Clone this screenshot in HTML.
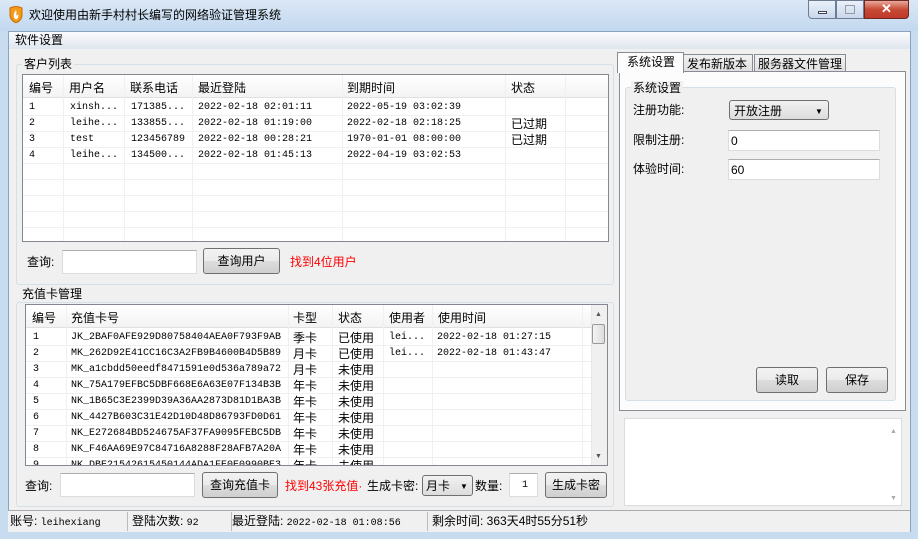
<!DOCTYPE html>
<html><head><meta charset="utf-8"><style>
*{box-sizing:border-box;margin:0;padding:0}
body{width:918px;height:539px;overflow:hidden;background:#c8dcf0;font-family:"Liberation Sans","Noto Sans CJK SC",sans-serif;font-size:12px;color:#000;position:relative}
.a{position:absolute}
.t{position:absolute;white-space:nowrap;line-height:14px}
.m{font-family:"Liberation Mono","Noto Sans CJK SC",monospace;font-size:10px}
.box{position:absolute;background:#fff;border:1px solid #828790}
.inp{position:absolute;background:#fff;border:1px solid #dcdcdc;border-top-color:#abadb3}
.btn{position:absolute;border:1px solid #707070;border-radius:3px;background:linear-gradient(#f2f2f2 0,#ebebeb 50%,#dddddd 51%,#cfcfcf 100%);text-align:center}
.grp{position:absolute;border:1px solid #d5dfe5;border-radius:3px}
.lbl{position:absolute;background:#f0f0f0;padding:0 2px;line-height:14px;white-space:nowrap}
.hd{position:absolute;background:linear-gradient(#fff,#f3f3f3);border-bottom:1px solid #e0e0e0}
.vl{position:absolute;width:1px;background:#f0f0f0}
.hl{position:absolute;height:1px;background:#f0f0f0}
.red{color:#f00}
</style></head><body>
<!-- title bar -->
<div class="a" style="left:0;top:0;width:918px;height:31px;background:linear-gradient(#dbe8f6,#c2d8ef)"></div>
<svg class="a" style="left:8px;top:6px" width="16" height="17" viewBox="0 0 16 17"><path d="M2 2 L8 0 L14 2 L14 9 Q14 14 8 17 Q2 14 2 9Z" fill="#f39a1a" stroke="#c96a00"/><path d="M8 4 Q5 8 6 11 Q7 14 9 13 Q11 11 10 8 Q9 10 8 9 Q9 7 8 4Z" fill="#fff"/></svg>
<div class="t" style="left:29px;top:8px;font-size:12px">欢迎使用由新手村村长编写的网络验证管理系统</div>
<div class="a" style="left:808px;top:0;width:28px;height:19px;border:1px solid #6d7c93;border-radius:0 0 0 4px;background:linear-gradient(#eaf1fa,#c9d8ec)"><div class="a" style="left:9px;top:10px;width:9px;height:3px;background:#fff;border:1px solid #445"></div></div>
<div class="a" style="left:836px;top:0;width:28px;height:19px;border:1px solid #6d7c93;background:linear-gradient(#eaf1fa,#c9d8ec)"><div class="a" style="left:8px;top:4px;width:10px;height:9px;border:1px solid #99a"></div></div>
<div class="a" style="left:864px;top:0;width:45px;height:19px;border:1px solid #6d2a22;border-radius:0 0 4px 0;background:linear-gradient(#e9a99b,#c74a34 50%,#c0392b);color:#fff;font-weight:bold;text-align:center;line-height:16px;font-size:13px">✕</div>
<!-- client -->
<div class="a" style="left:8px;top:31px;width:903px;height:501px;background:#f0f0f0;border:1px solid #8aa2bd"></div>
<div class="a" style="left:9px;top:32px;width:901px;height:17px;background:linear-gradient(#fafbfd,#dfe6ef)"></div>
<div class="t" style="left:15px;top:33px">软件设置</div>

<!-- 客户列表 group -->
<div class="grp" style="left:16px;top:64px;width:598px;height:221px"></div>
<div class="lbl" style="left:22px;top:57px">客户列表</div>
<div class="box" style="left:22px;top:74px;width:587px;height:168px"></div>
<div class="hd" style="left:23px;top:75px;width:585px;height:23px"></div>
<div class="vl" style="left:63px;top:75px;height:166px"></div><div class="vl" style="left:124px;top:75px;height:166px"></div><div class="vl" style="left:192px;top:75px;height:166px"></div><div class="vl" style="left:342px;top:75px;height:166px"></div><div class="vl" style="left:505px;top:75px;height:166px"></div><div class="vl" style="left:565px;top:75px;height:166px"></div>
<div class="hl" style="left:23px;top:115px;width:585px"></div><div class="hl" style="left:23px;top:131px;width:585px"></div><div class="hl" style="left:23px;top:147px;width:585px"></div><div class="hl" style="left:23px;top:163px;width:585px"></div><div class="hl" style="left:23px;top:179px;width:585px"></div><div class="hl" style="left:23px;top:195px;width:585px"></div><div class="hl" style="left:23px;top:211px;width:585px"></div><div class="hl" style="left:23px;top:227px;width:585px"></div>
<div class="t" style="left:29px;top:81px">编号</div><div class="t" style="left:69px;top:81px">用户名</div><div class="t" style="left:130px;top:81px">联系电话</div><div class="t" style="left:198px;top:81px">最近登陆</div><div class="t" style="left:347px;top:81px">到期时间</div><div class="t" style="left:511px;top:81px">状态</div>
<div class="t m" style="left:29px;top:101px">1</div><div class="t m" style="left:70px;top:101px">xinsh...</div><div class="t m" style="left:131px;top:101px">171385...</div><div class="t m" style="left:198px;top:101px">2022-02-18 02:01:11</div><div class="t m" style="left:347px;top:101px">2022-05-19 03:02:39</div>
<div class="t m" style="left:29px;top:117px">2</div><div class="t m" style="left:70px;top:117px">leihe...</div><div class="t m" style="left:131px;top:117px">133855...</div><div class="t m" style="left:198px;top:117px">2022-02-18 01:19:00</div><div class="t m" style="left:347px;top:117px">2022-02-18 02:18:25</div><div class="t" style="left:511px;top:117px">已过期</div>
<div class="t m" style="left:29px;top:133px">3</div><div class="t m" style="left:70px;top:133px">test</div><div class="t m" style="left:131px;top:133px">123456789</div><div class="t m" style="left:198px;top:133px">2022-02-18 00:28:21</div><div class="t m" style="left:347px;top:133px">1970-01-01 08:00:00</div><div class="t" style="left:511px;top:133px">已过期</div>
<div class="t m" style="left:29px;top:149px">4</div><div class="t m" style="left:70px;top:149px">leihe...</div><div class="t m" style="left:131px;top:149px">134500...</div><div class="t m" style="left:198px;top:149px">2022-02-18 01:45:13</div><div class="t m" style="left:347px;top:149px">2022-04-19 03:02:53</div>
<div class="t" style="left:27px;top:255px">查询:</div>
<div class="inp" style="left:62px;top:250px;width:135px;height:24px"></div>
<div class="btn" style="left:203px;top:248px;width:77px;height:26px;line-height:24px">查询用户</div>
<div class="t red" style="left:290px;top:255px">找到4位用户</div>

<!-- 充值卡管理 -->
<div class="grp" style="left:16px;top:302px;width:598px;height:205px"></div>
<div class="lbl" style="left:20px;top:287px">充值卡管理</div>
<div class="box" style="left:25px;top:304px;width:583px;height:162px;overflow:hidden">
<div class="t m" style="left:7px;top:154px">9</div><div class="t m" style="left:45px;top:154px">NK_DBE21542615450144ADA1FE0E0990BE3</div><div class="t" style="left:267px;top:154px">年卡</div><div class="t" style="left:312px;top:154px">未使用</div>
</div>
<div class="hd" style="left:26px;top:305px;width:565px;height:23px"></div>
<div class="vl" style="left:66px;top:305px;height:160px"></div><div class="vl" style="left:288px;top:305px;height:160px"></div><div class="vl" style="left:332px;top:305px;height:160px"></div><div class="vl" style="left:383px;top:305px;height:160px"></div><div class="vl" style="left:432px;top:305px;height:160px"></div><div class="vl" style="left:582px;top:305px;height:160px"></div>
<div class="hl" style="left:26px;top:345px;width:565px"></div><div class="hl" style="left:26px;top:361px;width:565px"></div><div class="hl" style="left:26px;top:377px;width:565px"></div><div class="hl" style="left:26px;top:393px;width:565px"></div><div class="hl" style="left:26px;top:409px;width:565px"></div><div class="hl" style="left:26px;top:425px;width:565px"></div><div class="hl" style="left:26px;top:441px;width:565px"></div><div class="hl" style="left:26px;top:457px;width:565px"></div>
<div class="a" style="left:591px;top:305px;width:16px;height:160px;background:#f0f0f0;border-left:1px solid #e8e8e8"></div>
<div class="a" style="left:592px;top:324px;width:13px;height:20px;border:1px solid #999;border-radius:2px;background:linear-gradient(90deg,#f4f4f4,#dcdcdc)"></div>
<div class="t" style="left:595px;top:308px;font-size:7px;color:#555">▲</div><div class="t" style="left:595px;top:450px;font-size:7px;color:#555">▼</div>
<div class="t" style="left:32px;top:311px">编号</div><div class="t" style="left:71px;top:311px">充值卡号</div><div class="t" style="left:293px;top:311px">卡型</div><div class="t" style="left:338px;top:311px">状态</div><div class="t" style="left:389px;top:311px">使用者</div><div class="t" style="left:438px;top:311px">使用时间</div>
<div class="t m" style="left:33px;top:331px">1</div><div class="t m" style="left:71px;top:331px">JK_2BAF0AFE929D80758404AEA0F793F9AB</div><div class="t" style="left:293px;top:331px">季卡</div><div class="t" style="left:338px;top:331px">已使用</div><div class="t m" style="left:389px;top:331px">lei...</div><div class="t m" style="left:437px;top:331px">2022-02-18 01:27:15</div>
<div class="t m" style="left:33px;top:347px">2</div><div class="t m" style="left:71px;top:347px">MK_262D92E41CC16C3A2FB9B4600B4D5B89</div><div class="t" style="left:293px;top:347px">月卡</div><div class="t" style="left:338px;top:347px">已使用</div><div class="t m" style="left:389px;top:347px">lei...</div><div class="t m" style="left:437px;top:347px">2022-02-18 01:43:47</div>
<div class="t m" style="left:33px;top:363px">3</div><div class="t m" style="left:71px;top:363px">MK_a1cbdd50eedf8471591e0d536a789a72</div><div class="t" style="left:293px;top:363px">月卡</div><div class="t" style="left:338px;top:363px">未使用</div>
<div class="t m" style="left:33px;top:379px">4</div><div class="t m" style="left:71px;top:379px">NK_75A179EFBC5DBF668E6A63E07F134B3B</div><div class="t" style="left:293px;top:379px">年卡</div><div class="t" style="left:338px;top:379px">未使用</div>
<div class="t m" style="left:33px;top:395px">5</div><div class="t m" style="left:71px;top:395px">NK_1B65C3E2399D39A36AA2873D81D1BA3B</div><div class="t" style="left:293px;top:395px">年卡</div><div class="t" style="left:338px;top:395px">未使用</div>
<div class="t m" style="left:33px;top:411px">6</div><div class="t m" style="left:71px;top:411px">NK_4427B603C31E42D10D48D86793FD0D61</div><div class="t" style="left:293px;top:411px">年卡</div><div class="t" style="left:338px;top:411px">未使用</div>
<div class="t m" style="left:33px;top:427px">7</div><div class="t m" style="left:71px;top:427px">NK_E272684BD524675AF37FA9095FEBC5DB</div><div class="t" style="left:293px;top:427px">年卡</div><div class="t" style="left:338px;top:427px">未使用</div>
<div class="t m" style="left:33px;top:443px">8</div><div class="t m" style="left:71px;top:443px">NK_F46AA69E97C84716A8288F28AFB7A20A</div><div class="t" style="left:293px;top:443px">年卡</div><div class="t" style="left:338px;top:443px">未使用</div>
<div class="t" style="left:25px;top:479px">查询:</div>
<div class="inp" style="left:60px;top:473px;width:135px;height:24px"></div>
<div class="btn" style="left:202px;top:472px;width:76px;height:26px;line-height:24px">查询充值卡</div>
<div class="t red" style="left:285px;top:479px">找到43张充值·</div>
<div class="t" style="left:367px;top:479px">生成卡密:</div>
<div class="a" style="left:422px;top:475px;width:51px;height:21px;border:1px solid #707070;border-radius:3px;background:linear-gradient(#f2f2f2,#dcdcdc)"><span class="t" style="left:3px;top:3px">月卡</span><span class="t" style="left:37px;top:4px;font-size:8px">▼</span></div>
<div class="t" style="left:475px;top:479px">数量:</div>
<div class="inp" style="left:509px;top:473px;width:29px;height:24px"><span class="t m" style="left:12px;top:5px">1</span></div>
<div class="btn" style="left:545px;top:472px;width:62px;height:26px;line-height:24px">生成卡密</div>

<!-- right tabs -->
<div class="a" style="left:619px;top:71px;width:287px;height:340px;background:#fcfcfc;border:1px solid #898c95"></div>
<div class="a" style="left:683px;top:54px;width:70px;height:18px;border:1px solid #898c95;background:linear-gradient(#f2f2f2,#dfdfdf)"></div>
<div class="t" style="left:687px;top:57px">发布新版本</div>
<div class="a" style="left:754px;top:54px;width:92px;height:18px;border:1px solid #898c95;background:linear-gradient(#f2f2f2,#dfdfdf)"></div>
<div class="t" style="left:758px;top:57px">服务器文件管理</div>
<div class="a" style="left:617px;top:52px;width:67px;height:21px;border:1px solid #898c95;border-bottom:none;background:#fcfcfc"></div>
<div class="t" style="left:627px;top:55px">系统设置</div>
<div class="a" style="left:625px;top:87px;width:271px;height:314px;background:#f0f0f0;border:1px solid #d5dfe5;border-radius:3px"></div>
<div class="lbl" style="left:631px;top:81px">系统设置</div>
<div class="t" style="left:633px;top:103px">注册功能:</div>
<div class="a" style="left:729px;top:100px;width:100px;height:20px;border:1px solid #707070;border-radius:3px;background:linear-gradient(#f2f2f2,#dcdcdc)"><span class="t" style="left:4px;top:3px">开放注册</span><span class="t" style="left:85px;top:4px;font-size:8px">▼</span></div>
<div class="t" style="left:633px;top:133px">限制注册:</div>
<div class="inp" style="left:728px;top:130px;width:152px;height:21px"><span class="t" style="left:2px;top:3px">0</span></div>
<div class="t" style="left:633px;top:162px">体验时间:</div>
<div class="inp" style="left:728px;top:159px;width:152px;height:21px"><span class="t" style="left:2px;top:3px">60</span></div>
<div class="btn" style="left:756px;top:367px;width:62px;height:26px;line-height:24px">读取</div>
<div class="btn" style="left:826px;top:367px;width:62px;height:26px;line-height:24px">保存</div>
<div class="a" style="left:624px;top:418px;width:278px;height:88px;background:#fff;border:1px solid #dcdcdc"></div>
<div class="a" style="left:885px;top:419px;width:16px;height:86px;background:#fff"></div>
<div class="t" style="left:890px;top:425px;font-size:7px;color:#aaa">▲</div><div class="t" style="left:890px;top:492px;font-size:7px;color:#aaa">▼</div>

<!-- status bar -->
<div class="a" style="left:8px;top:510px;width:902px;height:22px;background:#f0f0f0;border-top:1px solid #aaa"></div>
<div class="a" style="left:127px;top:512px;width:1px;height:19px;background:#bbb"></div>
<div class="a" style="left:231px;top:512px;width:1px;height:19px;background:#bbb"></div>
<div class="a" style="left:427px;top:512px;width:1px;height:19px;background:#bbb"></div>
<div class="t" style="left:10px;top:514px">账号: <span class="m">leihexiang</span></div>
<div class="t" style="left:132px;top:514px">登陆次数: <span class="m">92</span></div>
<div class="t" style="left:232px;top:514px">最近登陆: <span class="m">2022-02-18 01:08:56</span></div>
<div class="t" style="left:432px;top:514px">剩余时间: 363天4时55分51秒</div>
</body></html>
